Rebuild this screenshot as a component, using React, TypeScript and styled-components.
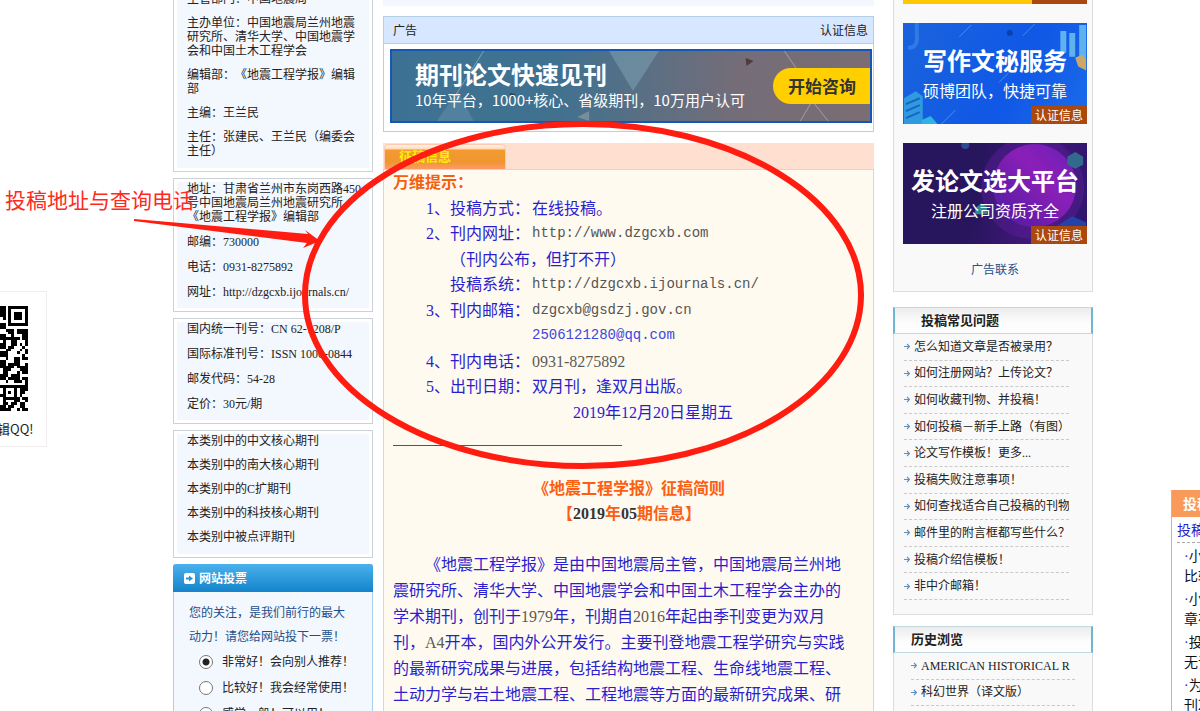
import React from 'react';
import styled, { createGlobalStyle } from 'styled-components';

const GlobalStyle = createGlobalStyle`
  *, *::before, *::after { box-sizing: border-box; }
  body {
    margin: 0;
    background: #fff;
    color: #222;
    font-family: "Liberation Serif", "Noto Sans CJK SC", serif;
    font-size: 12px;
    line-height: 14px;
    text-spacing-trim: space-all;
  }
  p, h2, h3, ul { margin: 0; padding: 0; }
  ul { list-style: none; }
  a { color: inherit; text-decoration: none; }
`;

const sans = '"Noto Sans CJK SC", sans-serif';
const markerRed = '#ff1c10';

const Page = styled.div`
  position: relative;
  height: 100vh;
  overflow: hidden;
`;

const Columns = styled.main`
  display: grid;
  grid-template-columns: 200px minmax(0, 1fr) 200px;
  padding: 0 107px 0 173px;
  align-items: start;
`;

/* ---------- left column ---------- */

const LeftColumn = styled.aside`
  display: flex;
  flex-direction: column;
  gap: 6px;
  margin-top: -12px;
`;

const InfoPanel = styled.section<{ $gap: number; $bottom: number }>`
  border: 1px solid #ccd2d8;
  padding: 3px;
  background: #fff;

  > div {
    display: flex;
    flex-direction: column;
    align-items: flex-start;
    gap: ${p => p.$gap}px;
    padding: 0 3px ${p => p.$bottom}px 10px;
    background: #f3f7fe;
  }
`;

const VoteBox = styled.form`
  border: 1px solid #a9d0ee;
  border-top: 0;
  border-radius: 3px 3px 0 0;
  background: #f3f7fe;
`;

const VoteHeader = styled.h2`
  display: flex;
  align-items: center;
  gap: 4px;
  height: 28px;
  margin: 0 -1px;
  padding-left: 11px;
  border-radius: 3px 3px 0 0;
  background: linear-gradient(#4ab2ec, #1483cb);
  color: #fff;
  font: bold 12px/28px ${sans};
`;

const Question = styled.p`
  padding: 9px 24px 0 15px;
  color: #1d4f8b;
  line-height: 24px;
`;

const Option = styled.label`
  display: flex;
  align-items: center;
  gap: 9px;
  height: 26px;
  padding-left: 25px;
`;

const Radio = styled.input`
  appearance: none;
  width: 14px;
  height: 14px;
  margin: 0;
  border: 1px solid #777;
  border-radius: 50%;
  background: #fff;

  &:checked { background: radial-gradient(circle, #222 3px, #fff 4px); }
`;

/* ---------- centre column ---------- */

const CenterColumn = styled.div`
  margin: 0 19px 0 10px;
`;

const PreviousPanel = styled.div`
  height: 6px;
  margin-bottom: 10px;
  background: #f3f7fe;
`;

const AdPanel = styled.section`
  border: 1px solid #b4d0e8;
  margin-bottom: 11px;
`;

const AdHeader = styled.header`
  display: flex;
  justify-content: space-between;
  height: 27px;
  padding: 0 5px 0 9px;
  border-bottom: 1px solid #b4d0e8;
  background: #d7e7ff;
  line-height: 28px;
`;

const Banner = styled.a`
  position: relative;
  display: flex;
  align-items: center;
  justify-content: space-between;
  height: 74px;
  margin: 5px 1px 8px 6px;
  padding-left: 23px;
  border: 2px solid #1457b4;
  background: linear-gradient(90deg, #3d7194 0%, #41718f 35%, #746d78 72%, #7b6d73 100%);
  color: #fff;
  font-family: ${sans};
`;

const Backdrop = styled.svg`
  position: absolute;
  inset: 0;
  width: 100%;
  height: 100%;
`;

const BannerText = styled.span`
  position: relative;
  font-size: 15px;
  line-height: 24px;
  white-space: nowrap;

  strong {
    display: block;
    font-size: 24px;
    line-height: 28px;
  }
`;

const BannerAction = styled.span`
  position: relative;
  width: 97px;
  padding-left: 15px;
  border-radius: 18px 0 0 18px;
  background: #ffcf00;
  color: #333;
  font-size: 17px;
  font-weight: bold;
  line-height: 36px;
`;

const TabBar = styled.header`
  height: 26px;
  padding: 1px 1px 0;
  background: #ffdfd0;
`;

const Tab = styled.h2`
  width: 122px;
  height: 25px;
  padding-left: 14px;
  border: 1px solid #ffc9b0;
  border-bottom: 0;
  border-radius: 5px 5px 0 0;
  background: linear-gradient(#fff3ea 0, #ffd9b8 4px, #f39a30 5px, #f0962f 17px, #fd9a68 100%);
  color: #ffee00;
  font: bold 13px/21px ${sans};
`;

const Article = styled.article`
  min-height: 600px;
  padding: 0 22px 0 9px;
  border: 1px solid #ffc9b5;
  background: #fffaef;
  color: #2a1fd0;
  font-size: 16px;
`;

const Tips = styled.section`
  display: grid;
  grid-auto-rows: 1fr;
  min-height: 255px;
  line-height: 25px;
`;

const TipsTitle = styled.h3`
  color: #f4600f;
  font-size: 16px;
`;

const Tip = styled.p`
  display: grid;
  grid-template-columns: 24px 82px 1fr;
  padding-left: 33px;
  white-space: nowrap;
`;

const TipNote = styled.span`
  grid-column: 2 / 4;
`;

const TipDate = styled.p`
  padding-left: 180px;
`;

const Mono = styled.a<{ $blue?: boolean }>`
  grid-column: 3;
  color: ${p => (p.$blue ? '#3a48e0' : '#555')};
  font-family: "Liberation Mono", monospace;
  font-size: 14px;
`;

const TipLabel = styled.span`
  grid-column: 2;
`;

const Rule = styled.hr`
  width: 229px;
  height: 1px;
  margin: 20px 0 30px;
  border: 0;
  background: #555;
`;

const ArticleTitle = styled.h2`
  margin-bottom: 26px;
  padding-left: 14px;
  color: #fb5f14;
  font-size: 16px;
  line-height: 25px;
  text-align: center;

  b { color: #333; }
`;

const Body = styled.p`
  line-height: 26px;
  text-indent: 2em;
`;

const Num = styled.span`
  color: #5c5a55;
`;

/* ---------- right column ---------- */

const RightColumn = styled.aside`
  display: flex;
  flex-direction: column;
`;

const AdStack = styled.section`
  display: flex;
  flex-direction: column;
  align-items: center;
  gap: 19px;
  height: 292px;
  padding-left: 4px;
  margin-bottom: 15px;
  border: 1px solid #dcdcdc;
  border-top: 0;
  background: #f9f9f9;
`;

const AdTail = styled.div`
  width: 184px;
  height: 4px;
  background: linear-gradient(90deg, #ffc800 129px, #a9480f 129px);
`;

const AdCard = styled.a<{ $bg: string }>`
  position: relative;
  display: block;
  width: 184px;
  height: 101px;
  padding-top: 19px;
  overflow: hidden;
  background: ${p => p.$bg};
  color: #fff;
  font-family: ${sans};
  font-size: 16px;
  line-height: 24px;
  text-align: center;
`;

const AdTitle = styled.strong`
  position: relative;
  display: block;
  font-size: 24px;
  line-height: 36px;
  white-space: nowrap;
`;

const AdSub = styled.span`
  position: relative;
`;

const Badge = styled.span`
  position: absolute;
  right: 0;
  bottom: 0;
  width: 56px;
  background: #a9480f;
  font-size: 12px;
  line-height: 18px;
`;

const AdContact = styled.a`
  color: #1f4f8f;
`;

const ListPanel = styled.section<{ $rows: number }>`
  margin-bottom: 11px;
  border: 1px solid #dcdcdc;
  border-top: 0;
  background: #f9f9f9;

  ul {
    display: grid;
    grid-auto-rows: 1fr;
    min-height: ${p => p.$rows}px;
    margin-bottom: 14px;
  }
`;

const ListHeader = styled.h2<{ $indent: number }>`
  height: 27px;
  margin: 0 -1px;
  padding-left: ${p => p.$indent}px;
  border: solid #c3d9e2;
  border-width: 1px 2px;
  border-left-color: #6fb6d2;
  border-right-color: #6fb6d2;
  background: linear-gradient(#ececec, #fdfdfd 60%);
  font: bold 13px/24px ${sans};
`;

const ListItem = styled.li<{ $inset?: boolean }>`
  display: flex;
  align-items: center;
  gap: 4px;
  margin: ${p => (p.$inset ? '0 17px' : '0 23px 0 10px')};
  overflow: hidden;
  border-bottom: 1px dashed #c9c9c9;
  white-space: nowrap;

  svg { flex: none; }
`;

/* ---------- floating widgets ---------- */

const QrFloat = styled.aside`
  position: absolute;
  left: 0;
  top: 291px;
  width: 47px;
  height: 156px;
  padding-top: 14px;
  overflow: hidden;
  border: 1px solid #eee;
  border-left: 0;
  background: #fff;
  font: 13px/18px ${sans};

  svg { display: block; margin-bottom: 9px; }
  p { margin-left: -3px; }
`;

const NoticeFloat = styled.aside`
  position: absolute;
  right: 0;
  top: 490px;
  width: 29px;
  height: 300px;
  overflow: hidden;
  border-left: 1px solid #f7a878;
  background: #fff;
  color: #111;
  font: 14px/19px ${sans};
  white-space: nowrap;
`;

const NoticeTitle = styled.h2`
  padding-left: 11px;
  background: #f99a5a;
  color: #fff;
  font: bold 14px/27px ${sans};
`;

const NoticeLink = styled.a`
  display: block;
  margin: 0 0 3px 5px;
  border-bottom: 1px dashed #aaa;
  color: #2a1fd0;
  line-height: 25px;
`;

const NoticeItem = styled.p`
  padding-left: 12px;
  margin-bottom: 4px;

  i {
    color: #2a1fd0;
    font-family: "Liberation Serif", serif;
    font-style: normal;
  }
`;

const Annotation = styled.div`
  position: absolute;
  left: 0;
  top: 0;
  pointer-events: none;

  svg { display: block; }
`;

const AnnotationText = styled.span`
  position: absolute;
  left: 5px;
  top: 185px;
  color: #ff2a1c;
  font: 21px/28px ${sans};
  white-space: nowrap;
`;

/* ---------- data ---------- */

const qrRows = [
  '1101111111', '1101000001', '1101011101', '1101011101', '0101011101', '0001000001', '1101111111',
  '1100000000', '0011101111', '0001101111', '1100100011', '1111111011', '0100110001', '1100110101',
  '1101100010', '0011000101', '1110001001', '1110000010', '0010011011', '1100011000', '1101111001',
  '1111101111', '0111000111', '0110001011', '1110111000', '1101111011', '0010011101', '0000000001',
  '1111111111', '0100010111', '0101010110', '1100010100', '0111111011', '0100011001', '0110110110',
  '1101100110', '1111001011',
];

const categories = [
  '本类别中的中文核心期刊',
  '本类别中的南大核心期刊',
  '本类别中的C扩期刊',
  '本类别中的科技核心期刊',
  '本类别中被点评期刊',
];

const faqs = [
  '怎么知道文章是否被录用？',
  '如何注册网站？上传论文？',
  '如何收藏刊物、并投稿！',
  '如何投稿－新手上路（有图）',
  '论文写作模板！更多...',
  '投稿失败注意事项！',
  '如何查找适合自己投稿的刊物',
  '邮件里的附言框都写些什么？',
  '投稿介绍信模板！',
  '非中介邮箱！',
];

const history = ['AMERICAN HISTORICAL R', '科幻世界（译文版）', '地震工程学报'];

const options = ['非常好！会向别人推荐！', '比较好！我会经常使用！', '感觉一般！可以用！'];

const notices = [
  ['小编提醒', '比较多的'],
  ['小编提醒', '章在投稿'],
  ['投稿之后', '无音讯的'],
  ['为您推荐', '刊2019'],
];

const Bullet = () => (
  <svg width="6" height="7" viewBox="0 0 6 7" aria-hidden="true">
    <path d="M0 3.5H5M3 1L5.5 3.5L3 6" fill="none" stroke="#5f8fba" strokeWidth="1.1" />
  </svg>
);

const Qr = () => (
  <svg width="28" height="105" viewBox="0 0 10 37" preserveAspectRatio="none" shapeRendering="crispEdges" aria-hidden="true">
    {qrRows.map((row, y) =>
      [...row].map((bit, x) => (bit === '1' ? <rect key={`${x}-${y}`} x={x} y={y} width="1" height="1" fill="#000" /> : null)),
    )}
  </svg>
);

export default function App() {
  return (
    <Page>
      <GlobalStyle />
      <Columns>
        <LeftColumn>
          <InfoPanel $gap={10} $bottom={10}>
            <div>
              <p>主管部门：中国地震局</p>
              <p>主办单位：中国地震局兰州地震研究所、清华大学、中国地震学会和中国土木工程学会</p>
              <p>编辑部：《地震工程学报》编辑部</p>
              <p>主编：王兰民</p>
              <p>主任：张建民、王兰民（编委会主任）</p>
            </div>
          </InfoPanel>
          <InfoPanel $gap={11} $bottom={9}>
            <div>
              <p>地址：甘肃省兰州市东岗西路450号中国地震局兰州地震研究所《地震工程学报》编辑部</p>
              <p>邮编：730000</p>
              <p>电话：0931-8275892</p>
              <p>网址：<a href="#site">http://dzgcxb.ijournals.cn/</a></p>
            </div>
          </InfoPanel>
          <InfoPanel $gap={11} $bottom={9}>
            <div>
              <p>国内统一刊号：CN 62-1208/P</p>
              <p>国际标准刊号：ISSN 1000-0844</p>
              <p>邮发代码：54-28</p>
              <p>定价：30元/期</p>
            </div>
          </InfoPanel>
          <InfoPanel $gap={10} $bottom={10}>
            <div>
              {categories.map(c => <a key={c} href="#category">{c}</a>)}
            </div>
          </InfoPanel>
          <VoteBox>
            <VoteHeader>
              <svg width="11" height="11" viewBox="0 0 11 11" aria-hidden="true">
                <rect width="11" height="11" rx="2" fill="#fff" />
                <path d="M2 4.5H5V2.5L9 5.5L5 8.5V6.5H2Z" fill="#2a93d6" />
              </svg>
              网站投票
            </VoteHeader>
            <Question>您的关注，是我们前行的最大动力！请您给网站投下一票！</Question>
            {options.map((o, i) => (
              <Option key={o}>
                <Radio type="radio" name="vote" defaultChecked={i === 0} />
                {o}
              </Option>
            ))}
          </VoteBox>
        </LeftColumn>

        <CenterColumn>
          <PreviousPanel />
          <AdPanel>
            <AdHeader><span>广告</span><span>认证信息</span></AdHeader>
            <Banner href="#ad">
              <Backdrop viewBox="0 0 480 70" preserveAspectRatio="none" aria-hidden="true">
                <path d="M218 0H268L242 40Z" fill="#8db4c4" opacity="0.4" />
                <path d="M45 70L66 40L82 70Z" fill="#8db4c4" opacity="0.25" />
                <path d="M92 0L64 44M394 0L412 26M410 70L422 50L438 70" stroke="#c5d0d8" opacity="0.5" fill="none" />
                <path d="M355 7L363 10L356 15Z" fill="#4c3c40" />
                <path d="M118 42L124 43L120 47Z" fill="#24435a" />
                <path d="M186 66L198 60V70Z" fill="#8c98a4" opacity="0.7" />
              </Backdrop>
              <BannerText>
                <strong>期刊论文快速见刊</strong>
                10年平台，1000+核心、省级期刊，10万用户认可
              </BannerText>
              <BannerAction>开始咨询</BannerAction>
            </Banner>
          </AdPanel>

          <TabBar><Tab>征稿信息</Tab></TabBar>
          <Article>
            <Tips>
              <TipsTitle>万维提示：</TipsTitle>
              <Tip><span>1、</span><TipLabel>投稿方式：</TipLabel><span>在线投稿。</span></Tip>
              <Tip><span>2、</span><TipLabel>刊内网址：</TipLabel><Mono href="#journal">http://www.dzgcxb.com</Mono></Tip>
              <Tip><TipNote>（刊内公布，但打不开）</TipNote></Tip>
              <Tip><TipLabel>投稿系统：</TipLabel><Mono href="#submit">http://dzgcxb.ijournals.cn/</Mono></Tip>
              <Tip><span>3、</span><TipLabel>刊内邮箱：</TipLabel><Mono href="#mail">dzgcxb@gsdzj.gov.cn</Mono></Tip>
              <Tip><Mono $blue href="#qq">2506121280@qq.com</Mono></Tip>
              <Tip><span>4、</span><TipLabel>刊内电话：</TipLabel><Num>0931-8275892</Num></Tip>
              <Tip><span>5、</span><TipLabel>出刊日期：</TipLabel><span>双月刊，逢双月出版。</span></Tip>
              <TipDate>2019年12月20日星期五</TipDate>
            </Tips>
            <Rule />
            <ArticleTitle>
              《地震工程学报》征稿简则<br />【<b>2019</b>年<b>05</b>期信息】
            </ArticleTitle>
            <Body>
              《地震工程学报》是由中国地震局主管，中国地震局兰州地震研究所、清华大学、中国地震学会和中国土木工程学会主办的学术期刊，创刊于<Num>1979</Num>年，刊期自<Num>2016</Num>年起由季刊变更为双月刊，<Num>A4</Num>开本，国内外公开发行。主要刊登地震工程学研究与实践的最新研究成果与进展，包括结构地震工程、生命线地震工程、土动力学与岩土地震工程、工程地震等方面的最新研究成果、研究进展，及时追踪报道地震，特别是国内外地震工程界的学术动态。
            </Body>
          </Article>
        </CenterColumn>

        <RightColumn>
          <AdStack>
            <AdTail />
            <AdCard href="#writing" $bg="linear-gradient(120deg, #1a63dc, #1058e6 60%, #1b6bea)">
              <Backdrop viewBox="0 0 184 102" aria-hidden="true">
                <path d="M4 25Q15 26 13 10V0" fill="none" stroke="#3f8af0" strokeWidth="4" opacity="0.6" />
                <path d="M56 14L68 2M120 13L132 1M38 102L52 88M96 60L106 50" stroke="#5fa4f5" opacity="0.7" />
                <path d="M158 8H164V30H158ZM167 10H173V34H167ZM177 2H184V36H177Z" fill="#5fb2ee" />
                <path d="M173 35L180 32L184 36V48L176 44Z" fill="#c9a86a" />
                <path d="M0 76L12 69L19 74V102H0Z" fill="#2f9ae0" />
                <path d="M2 82L16 76M2 89L16 83M2 96L16 90" stroke="#1a62c4" strokeWidth="2" />
                <circle cx="107" cy="10" r="3" fill="#0b3fb4" />
                <path d="M18 98L27 94L34 102H18Z" fill="#31b2e4" />
              </Backdrop>
              <AdTitle>写作文秘服务</AdTitle>
              <AdSub>硕博团队，快捷可靠</AdSub>
              <Badge>认证信息</Badge>
            </AdCard>
            <AdCard $bg="linear-gradient(100deg, #27155e 40%, #401878 70%, #2c166c)" href="#publish">
              <Backdrop viewBox="0 0 184 102" aria-hidden="true">
                <defs>
                  <linearGradient id="orb" x1="0" y1="1" x2="1" y2="0">
                    <stop offset="0" stopColor="#4b1b9c" />
                    <stop offset="0.6" stopColor="#8a1fb8" />
                    <stop offset="1" stopColor="#6a1fb8" />
                  </linearGradient>
                </defs>
                <circle cx="130" cy="45" r="52" fill="#5a1c96" opacity="0.5" />
                <circle cx="132" cy="43" r="42" fill="url(#orb)" />
                <path d="M165 14L173 9L181 14V22L173 26L165 22Z" fill="#326a8e" />
                <path d="M72 66L78 61L84 65V72H72Z" fill="#2a8c94" />
                <path d="M154 84L170 74L184 80V102H154Z" fill="#2443a8" />
                <circle cx="62" cy="2" r="4" fill="#2f4a90" />
              </Backdrop>
              <AdTitle>发论文选大平台</AdTitle>
              <AdSub>注册公司资质齐全</AdSub>
              <Badge>认证信息</Badge>
            </AdCard>
            <AdContact href="#contact">广告联系</AdContact>
          </AdStack>

          <ListPanel $rows={266}>
            <ListHeader $indent={26}>投稿常见问题</ListHeader>
            <ul>
              {faqs.map(f => <ListItem key={f}><Bullet /><a href="#faq">{f}</a></ListItem>)}
            </ul>
          </ListPanel>
          <ListPanel $rows={80}>
            <ListHeader $indent={16}>历史浏览</ListHeader>
            <ul>
              {history.map(h => <ListItem key={h} $inset><Bullet /><a href="#history">{h}</a></ListItem>)}
            </ul>
          </ListPanel>
        </RightColumn>
      </Columns>

      <QrFloat>
        <Qr />
        <p>辑QQ!</p>
      </QrFloat>

      <NoticeFloat>
        <NoticeTitle>投稿须知</NoticeTitle>
        <NoticeLink href="#notice">投稿指南</NoticeLink>
        {notices.map(([a, b]) => (
          <NoticeItem key={b}><i>·</i>{a}<br />{b}</NoticeItem>
        ))}
      </NoticeFloat>

      <Annotation>
        <svg width="880" height="480" viewBox="0 0 880 480" aria-hidden="true">
          <ellipse cx="583" cy="295" rx="278" ry="171" fill="none" stroke={markerRed} strokeWidth="6" />
          <path d="M134 219L308 234L305 230L320 241L303 248L307 243L134 221Z" fill={markerRed} />
        </svg>
        <AnnotationText>投稿地址与查询电话</AnnotationText>
      </Annotation>
    </Page>
  );
}
